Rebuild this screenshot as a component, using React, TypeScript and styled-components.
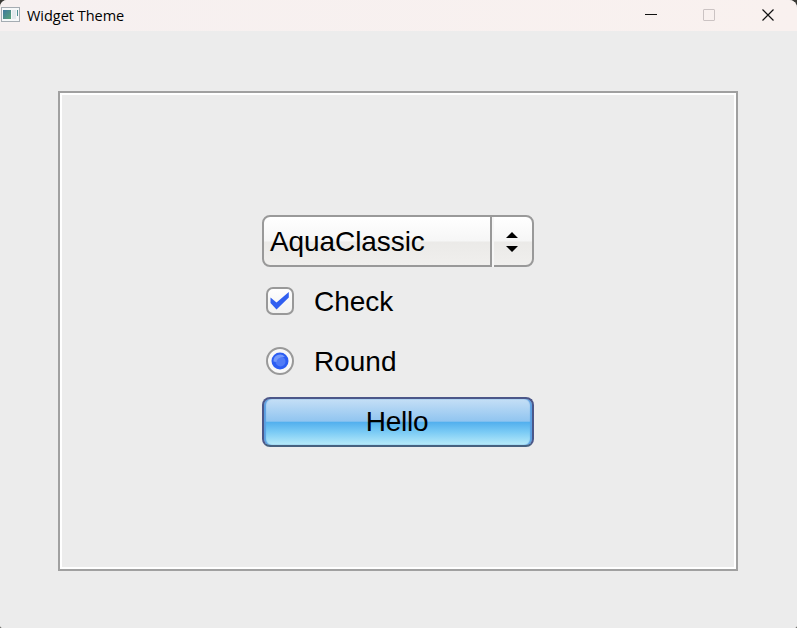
import React from "react";
import styled, { createGlobalStyle } from "styled-components";

const GlobalStyle = createGlobalStyle`
  * { box-sizing: border-box; }
  body { margin: 0; background: #3a3a36; overflow: hidden; }
`;

const Window = styled.div`
  width: 797px;
  height: 628px;
  display: flex;
  flex-direction: column;
  background: #ececec;
  border-radius: 7px 8px 2px 2px;
  overflow: hidden;
  color: #000;
  font-family: "Liberation Sans", Arial, sans-serif;
`;

const TitleBar = styled.header`
  height: 31px;
  flex: none;
  display: flex;
  align-items: flex-start;
  background: linear-gradient(90deg, #f6f0f0, #f9f1ef);
  padding-left: 1px;
`;

const Title = styled.span`
  flex: 1;
  margin-left: 7px;
  font: 14.5px/32px "Open Sans", sans-serif;
  letter-spacing: -0.02px;
`;

const Controls = styled.div`
  display: flex;
  height: 30px;
`;

const ControlButton = styled.button<{ $disabled?: boolean }>`
  width: 58.5px;
  padding: 0;
  border: 0;
  background: none;
  display: flex;
  align-items: center;
  justify-content: center;
  color: ${(p) => (p.$disabled ? "#cbc3c3" : "#111")};
`;

const Content = styled.main`
  flex: 1;
  padding: 60px 59px 57px 58px;
`;

const Frame = styled.section`
  height: 480px;
  border: 2px solid #a0a0a0;
  box-shadow: inset 0 0 0 2px #fff;
  display: flex;
  flex-direction: column;
  align-items: center;
  padding-top: 122px;
`;

const Stack = styled.div`
  width: 272px;
  display: flex;
  flex-direction: column;
  font-size: 28px;
`;

const Combo = styled.div`
  height: 52px;
  display: flex;
  border: 2px solid #999;
  border-radius: 8px;
  background: linear-gradient(#fff 0%, #f6f6f6 50%, #ebeae8 52%, #f0efed 100%);
`;

const ComboValue = styled.div`
  width: 228px;
  padding-left: 6px;
  line-height: 49px;
  letter-spacing: -0.08px;
  border-right: 2px solid #999;
`;

const ComboArrows = styled.div`
  flex: 1;
  display: flex;
  align-items: center;
  justify-content: center;
  border-left: 2px solid #f6f6f6;
  margin-bottom: -2px;
  padding: 0 2px 1px 0;
`;

const Option = styled.label<{ $top: number }>`
  height: 28px;
  margin-top: ${(p) => p.$top}px;
  padding-left: 4px;
  display: flex;
  align-items: flex-start;
  gap: 20px;
  line-height: 30px;
`;

const HelloButton = styled.button`
  height: 50px;
  margin-top: 22px;
  padding: 0 2px 0 0;
  border: 2px solid #4c5789;
  border-bottom-color: #46617f;
  border-radius: 8px;
  background: linear-gradient(#c5dff6 0%, #91c5f0 48%, #53b0ee 51%, #7bcbf5 72%, #b8ebf9 100%);
  box-shadow: inset 2px 0 1px #5b9fe2, inset -2px 0 1px #5b9fe2;
  color: #000;
  font: 28px "Liberation Sans", Arial, sans-serif;
  letter-spacing: -0.25px;
`;

const IconSlot = styled.div`
  height: 16px;
  margin-top: 7px;
  display: flex;
`;

const AppIcon = () => (
  <IconSlot>
    <svg width="19" height="16" viewBox="0 0 19 16">
      <defs>
        <linearGradient id="pane" x2="1" y2="1">
          <stop stopColor="#3f789d" />
          <stop offset="1" stopColor="#58a578" />
        </linearGradient>
      </defs>
      <rect x=".5" y=".5" width="18" height="14" fill="#f6f8f9" stroke="#a5acb2" />
      <rect x="2" y="3" width="8" height="9" fill="url(#pane)" />
      <rect x="11" y="3" width="4" height="9" fill="#e2e9ed" />
      <rect x="16" y="3" width="1" height="6" fill="#4f9196" />
    </svg>
  </IconSlot>
);

const CheckMark = () => (
  <svg width="28" height="28" viewBox="0 0 28 28">
    <defs>
      <linearGradient id="checkFace" x2="0" y2="1">
        <stop stopColor="#fff" />
        <stop offset="1" stopColor="#f1f1f0" />
      </linearGradient>
    </defs>
    <rect x="1" y="1" width="26" height="26" rx="6" fill="url(#checkFace)" stroke="#999" strokeWidth="2" />
    <path d="M4.500 10.500 10.500 15.500 22.800 5v5.500L10.500 22.500 4.500 16Z" fill="#315ff0" />
  </svg>
);

const RadioMark = () => (
  <svg width="28" height="28" viewBox="0 0 28 28">
    <circle cx="14" cy="14" r="13" fill="#f8f8f8" stroke="#999" strokeWidth="2" />
    <circle cx="14" cy="14" r="8.5" fill="#2c5df2" />
    <circle cx="14.500" cy="14.500" r="5" fill="#507bf7" />
    <path d="M7.500 14.500a6.500 6.500 0 0 1 11.500-4.500c-4-.5-8 1-8.500 5Z" fill="#7599fa" />
  </svg>
);

export default function App() {
  return (
    <>
      <GlobalStyle />
      <Window>
        <TitleBar>
          <AppIcon />
          <Title>Widget Theme</Title>
          <Controls>
            <ControlButton aria-label="Minimize">
              <svg width="12" height="12"><path d="M0 5.500h12" stroke="currentColor" /></svg>
            </ControlButton>
            <ControlButton aria-label="Maximize" $disabled>
              <svg width="12" height="12"><rect x=".5" y=".5" width="11" height="11" rx=".5" fill="none" stroke="currentColor" /></svg>
            </ControlButton>
            <ControlButton aria-label="Close">
              <svg width="12" height="12"><path d="m.5.5 11 11m0-11-11 11" stroke="currentColor" strokeWidth="1.2" /></svg>
            </ControlButton>
          </Controls>
        </TitleBar>
        <Content>
          <Frame>
            <Stack>
              <Combo>
                <ComboValue>AquaClassic</ComboValue>
                <ComboArrows>
                  <svg width="12" height="20" viewBox="0 0 12 20">
                    <path d="M6 0 12 6H0ZM0 14h12L6 20Z" />
                  </svg>
                </ComboArrows>
              </Combo>
              <Option $top={20}><CheckMark />Check</Option>
              <Option $top={32}><RadioMark />Round</Option>
              <HelloButton>Hello</HelloButton>
            </Stack>
          </Frame>
        </Content>
      </Window>
    </>
  );
}
